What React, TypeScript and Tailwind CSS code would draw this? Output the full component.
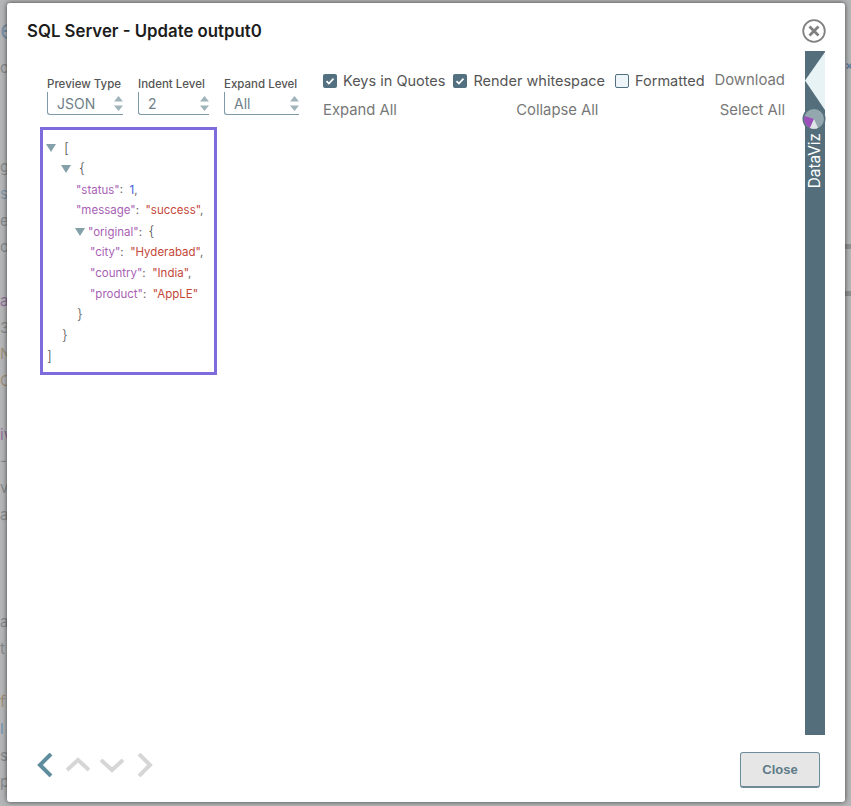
import { ReactNode } from "react";

const pageLetters = [
  { c: "g", color: "text-[#85898c]" },
  { c: "s", color: "text-[#7f93a6]" },
  { c: "e", color: "text-[#85898c]" },
  { c: "o", color: "text-[#85898c]" },
  { c: "", color: "" },
  { c: "a", color: "text-[#8f6f9a]" },
  { c: "3", color: "text-[#85898c]" },
  { c: "N", color: "text-[#9c8f78]" },
  { c: "C", color: "text-[#9c8f78]" },
  { c: "", color: "" },
  { c: "iv", color: "text-[#8f6f9a]" },
  { c: "-", color: "text-[#85898c]" },
  { c: "v", color: "text-[#85898c]" },
  { c: "a", color: "text-[#85898c]" },
  { c: "", color: "" },
  { c: "", color: "" },
  { c: "", color: "" },
  { c: "a", color: "text-[#85898c]" },
  { c: "t", color: "text-[#85898c]" },
  { c: "", color: "" },
  { c: "f", color: "text-[#9c8f78]" },
  { c: "l", color: "text-[#6f93b0]" },
  { c: "s", color: "text-[#85898c]" },
  { c: "p", color: "text-[#85898c]" },
];

function Key({ children }: { children: ReactNode }) {
  return <span className="text-[#a95fb6]">{children}</span>;
}

function Str({ children }: { children: ReactNode }) {
  return <span className="text-[#c4473a]">{children}</span>;
}

function Bracket({ children }: { children: ReactNode }) {
  return <span className="text-[14px] font-light text-[#555]">{children}</span>;
}

function Caret() {
  return (
    <svg width="10" height="8" viewBox="0 0 10 8" className="shrink-0">
      <path d="M0 0h10L5 8z" fill="#84a0a8" />
    </svg>
  );
}

function SelectBox({ label, value, width }: { label: string; value: string; width: string }) {
  return (
    <div className={`flex flex-col ${width}`}>
      <span className="text-[11.5px] leading-[14px] font-medium text-[#555] whitespace-nowrap">{label}</span>
      <div className="mt-[1px] flex h-[23px] items-center justify-between rounded-bl-[3px] border-b border-l border-[#7d9aa6] pl-[9px]">
        <span className="text-[14px] text-[#6f7f88]">{value}</span>
        <svg width="9" height="15" viewBox="0 0 9 15">
          <path d="M4.5 0L9 5.5H0z" fill="#9fb3ba" />
          <path d="M4.5 15L0 9.5h9z" fill="#9fb3ba" />
        </svg>
      </div>
    </div>
  );
}

function Check({ label, checked }: { label: string; checked: boolean }) {
  return (
    <label className="flex items-center gap-[6px] whitespace-nowrap">
      {checked ? (
        <span className="flex h-[14px] w-[14px] items-center justify-center rounded-[2px] bg-[#527080]">
          <svg width="10" height="10" viewBox="0 0 10 10">
            <path d="M1.5 5.2l2.4 2.4 4.6-5" fill="none" stroke="#fff" strokeWidth="1.7" />
          </svg>
        </span>
      ) : (
        <span className="h-[14px] w-[14px] rounded-[2px] border border-[#527080] bg-[#eef5f8]" />
      )}
      <span className="text-[14.5px] text-[#555]">{label}</span>
    </label>
  );
}

function Chevron({ d, color }: { d: string; color: string }) {
  return (
    <svg width="24" height="24" viewBox="0 0 24 24">
      <path d={d} fill="none" stroke={color} strokeWidth="4" />
    </svg>
  );
}

export default function App() {
  return (
    <div className="relative flex h-[806px] w-[851px] justify-between overflow-hidden bg-[#b4b5b6] font-['Inter',sans-serif]">
      <div className="w-[7px]">
        <div className="mt-[17px] h-[26px] text-[26px] leading-[26px] text-[#7b92a8]">e</div>
        <div className="mt-[15px] text-[15px] leading-[20px] text-[#85898c]">o</div>
        <div className="pt-[76px] text-[15px] leading-[26.75px]">
          {pageLetters.map((l, i) => (
            <div key={i} className={`h-[26.75px] ${l.color}`}>
              {l.c}
            </div>
          ))}
        </div>
      </div>
      <div className="w-[6px] text-[#5f7f9e]">
        <div className="mt-[58px] h-[16px] text-[12px] leading-[16px] font-bold">×</div>
        <div className="mt-[170px] h-[5px] bg-[#8d8f90]" />
        <div className="mt-[42px] h-[5px] bg-[#8d8f90]" />
      </div>

      <div className="absolute top-[3px] left-[7px] flex h-[799px] w-[838px] flex-col rounded-[3px] bg-white shadow-[0_0_5px_rgba(0,0,0,0.65)]">
        <div className="flex items-start justify-between pt-[16px] pr-[19px] pl-[20px]">
          <h1 className="text-[16.8px] leading-[24px] font-semibold text-[#1c1c1c]">SQL Server - Update output0</h1>
          <svg width="24" height="24" viewBox="0 0 24 24">
            <circle cx="12" cy="12" r="10.8" fill="none" stroke="#808080" strokeWidth="1.8" />
            <path d="M7.5 7.5l9 9M16.5 7.5l-9 9" stroke="#808080" strokeWidth="2.8" />
          </svg>
        </div>

        <div className="mt-[8px] flex min-h-0 flex-1 pr-[20px]">
          <div className="flex min-w-0 flex-1 flex-col pl-[33px]">
            <div className="flex pt-[19px] pl-[7px]">
              <div className="flex gap-[15px] pt-[7px]">
                <SelectBox label="Preview Type" value="JSON" width="w-[76px]" />
                <SelectBox label="Indent Level" value="2" width="w-[71px]" />
                <SelectBox label="Expand Level" value="All" width="w-[75px]" />
              </div>
              <div className="ml-[24px] flex w-[462px] flex-col">
                <div className="flex h-[21px] items-center justify-between">
                  <div className="flex gap-[8px]">
                    <Check label="Keys in Quotes" checked />
                    <Check label="Render whitespace" checked />
                    <div className="ml-[2px]">
                      <Check label="Formatted" checked={false} />
                    </div>
                  </div>
                  <span className="text-[14.9px] text-[#777]">Download</span>
                </div>
                <div className="mt-[9px] flex h-[21px] items-center justify-between text-[14.8px] text-[#777]">
                  <span>Expand All</span>
                  <span className="mr-[2px]">Collapse All</span>
                  <span>Select All</span>
                </div>
              </div>
            </div>

            <div className="mt-[6px] h-[248px] w-[177px] border-[3px] border-[#7e6bdc] pt-[8px] text-[11.5px] leading-[20.8px] text-[#666]">
              <div className="flex h-[20.8px] items-center pl-[3px]">
                <Caret />
                <span className="ml-[8px]">
                  <Bracket>[</Bracket>
                </span>
              </div>
              <div className="flex h-[20.8px] items-center pl-[18px]">
                <Caret />
                <span className="ml-[8px]">
                  <Bracket>{"{"}</Bracket>
                </span>
              </div>
              <div className="h-[20.8px] pl-[33px] whitespace-pre">
                <Key>"status"</Key>:  <span className="text-[#3b5bdb]">1</span>,
              </div>
              <div className="h-[20.8px] pl-[33px] whitespace-pre">
                <Key>"message"</Key>:  <Str>"success"</Str>,
              </div>
              <div className="flex h-[20.8px] items-center pl-[32px] whitespace-pre">
                <Caret />
                <span className="ml-[3px]">
                  <Key>"original"</Key>:  <Bracket>{"{"}</Bracket>
                </span>
              </div>
              <div className="h-[20.8px] pl-[47px] whitespace-pre">
                <Key>"city"</Key>:  <Str>"Hyderabad"</Str>,
              </div>
              <div className="h-[20.8px] pl-[47px] whitespace-pre">
                <Key>"country"</Key>:  <Str>"India"</Str>,
              </div>
              <div className="h-[20.8px] pl-[47px] whitespace-pre">
                <Key>"product"</Key>:  <Str>"AppLE"</Str>
              </div>
              <div className="h-[20.8px] pl-[34px]">
                <Bracket>{"}"}</Bracket>
              </div>
              <div className="h-[20.8px] pl-[19px]">
                <Bracket>{"}"}</Bracket>
              </div>
              <div className="h-[20.8px] pl-[4px]">
                <Bracket>]</Bracket>
              </div>
            </div>
          </div>

          <div className="relative flex h-[684px] w-[20px] flex-col items-center bg-[#546f7b]">
            <svg width="20" height="60" viewBox="0 0 20 60" className="shrink-0">
              <path d="M20 1V59L0 29.5z" fill="#e8f3f6" />
            </svg>
            <svg width="24" height="24" viewBox="0 0 24 24" className="absolute top-[56px] left-[-3px]">
              <circle cx="12" cy="12" r="11.5" fill="#546f7b" />
              <circle cx="12" cy="12" r="10" fill="#93a8ae" />
              <path d="M12 12L2.5 9A10 10 0 0 0 8 21z" fill="#9b4fb8" />
              <path d="M12 12L8 21A10 10 0 0 0 16 21z" fill="#dfe5e7" />
            </svg>
            <span className="mt-[22px] rotate-180 text-[15.3px] leading-[20px] text-white [writing-mode:vertical-rl]">DataViz</span>
          </div>
        </div>

        <div className="flex h-[65px] items-start justify-between pt-[15px] pr-[25px] pl-[25px]">
          <div className="mt-[1px] flex items-center gap-[10px]">
            <Chevron d="M19 1L8 12l11 11" color="#5f8d9e" />
            <Chevron d="M1 17L12 7l11 10" color="#d6d6d6" />
            <Chevron d="M1 7l11 10L23 7" color="#d6d6d6" />
            <Chevron d="M5 1l11 11L5 23" color="#d6d6d6" />
          </div>
          <button className="h-[36px] w-[80px] rounded-[3px] border border-b-2 border-[#6f8c99] bg-[#e6e6e6] font-['Liberation_Sans',sans-serif] text-[13px] font-bold text-[#5e7b88]">
            Close
          </button>
        </div>
      </div>
    </div>
  );
}
